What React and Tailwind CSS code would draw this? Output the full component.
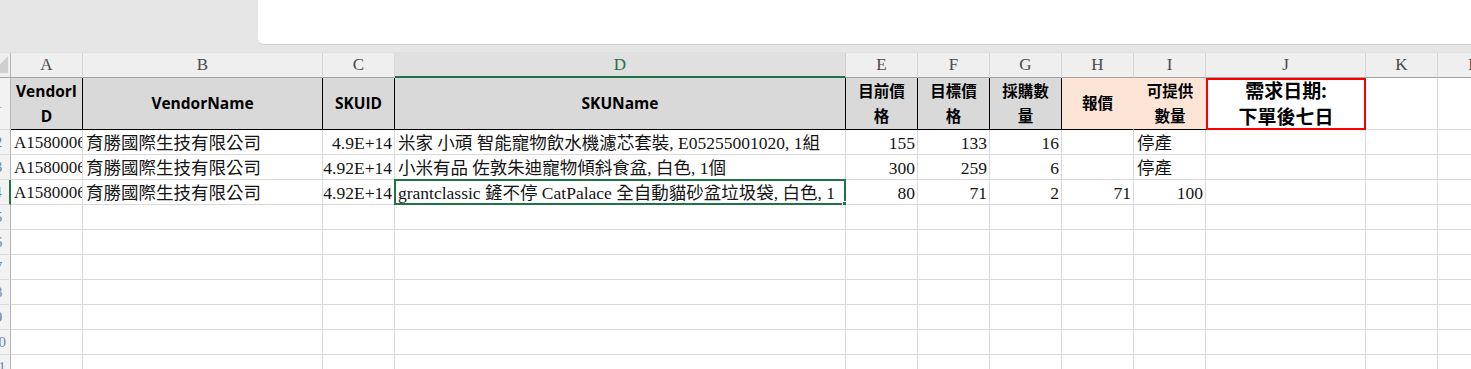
import React from "react";

const serif = "font-['Liberation_Serif','Noto_Sans_CJK_TC',serif]";
const sans = "font-['Open_Sans','Noto_Sans_CJK_TC',sans-serif]";

const columns = ["A", "B", "C", "D", "E", "F", "G", "H", "I", "J", "K", "L"];

// [text, align] per column A..I
const rows = [
  [
    ["A1580006", "l"],
    ["育勝國際生技有限公司", "l"],
    ["4.9E+14", "r"],
    ["米家 小頑 智能寵物飲水機濾芯套裝, E05255001020, 1組", "l"],
    ["155", "r"],
    ["133", "r"],
    ["16", "r"],
    ["", "r"],
    ["停產", "l"],
  ],
  [
    ["A1580006", "l"],
    ["育勝國際生技有限公司", "l"],
    ["4.92E+14", "r"],
    ["小米有品 佐敦朱迪寵物傾斜食盆, 白色, 1個", "l"],
    ["300", "r"],
    ["259", "r"],
    ["6", "r"],
    ["", "r"],
    ["停產", "l"],
  ],
  [
    ["A1580006", "l"],
    ["育勝國際生技有限公司", "l"],
    ["4.92E+14", "r"],
    ["grantclassic 鏟不停 CatPalace 全自動貓砂盆垃圾袋, 白色, 1", "l"],
    ["80", "r"],
    ["71", "r"],
    ["2", "r"],
    ["71", "r"],
    ["100", "r"],
  ],
];

const headers = [
  { lines: ["VendorI", "D"] },
  { lines: ["VendorName"] },
  { lines: ["SKUID"] },
  { lines: ["SKUName"] },
  { lines: ["目前價", "格"] },
  { lines: ["目標價", "格"] },
  { lines: ["採購數", "量"] },
  { lines: ["報價"], peach: true },
  { lines: ["可提供", "數量"], peach: true },
];

const RowHead = ({ n, active, h = "h-[25px]" }) => (
  <div
    className={`${h} bg-[#f2f2f2] border-b border-[#dadada] ${
      active ? "border-r-2 border-r-[#217346]" : "border-r border-r-[#b5b5b5]"
    } flex items-center justify-center text-[15px] text-[#6d87a6] ${serif}`}
  >
    {n}
  </div>
);

const DataCell = ({ text, align, selected, small }) => (
  <div
    className={`relative h-[25px] border-r border-b border-[#dadada] bg-white leading-[26px] text-[#141414] whitespace-nowrap ${serif} ${
      small ? "text-[17px]" : "text-[17.5px]"
    } ${align === "r" ? "text-right pr-[2px]" : "pl-[3px]"}`}
  >
    <div className="overflow-hidden">{text}</div>
    {selected && (
      <>
        <div className="absolute -left-[1px] -top-[1px] -right-[1px] -bottom-[1px] border-2 border-[#217346]" />
        <div className="absolute -right-[4px] -bottom-[4px] w-[7px] h-[7px] bg-[#217346] border border-white" />
      </>
    )}
  </div>
);

export default function App() {
  return (
    <div className="w-[1471px] h-[369px] overflow-hidden bg-white">
      {/* ribbon strip above the sheet */}
      <div className="h-[53px] bg-[#e6e6e6] border-b border-[#e0e0e0]">
        <div className="ml-[258px] h-[45px] bg-white rounded-bl-[6px] border-b border-[#cfcfcf]" />
      </div>

      <div className="ml-[-13px] grid grid-cols-[24px_72px_240px_72px_451px_72px_72px_72px_72px_72px_160px_72px_72px]">
        {/* column letters */}
        <div className="relative h-[25px] bg-[#efefef] border-r border-r-[#b5b5b5] border-b border-b-[#a3a3a3]">
          <svg className="absolute left-[13px] top-[3px]" width="9" height="18" viewBox="0 0 9 18">
            <polygon points="8,0 8,17 -8,17" fill="#cfcfcf" />
          </svg>
        </div>
        {columns.map((c) => (
          <div
            key={c}
            className={`h-[25px] flex items-center justify-center text-[17px] ${serif} ${
              c === "D"
                ? "bg-[#e0e0e0] text-[#217346] border-r border-r-[#d0d0d0] border-b-2 border-b-[#217346]"
                : "bg-[#efefef] text-[#4a4a4a] border-r border-r-[#d6d6d6] border-b border-b-[#a3a3a3]"
            }`}
          >
            {c}
          </div>
        ))}

        {/* header row */}
        <RowHead n="1" h="h-[52px]" />
        {headers.map((h, i) => (
          <div
            key={i}
            className={`h-[52px] flex flex-col items-center justify-center text-[15.5px] leading-[25px] font-bold text-black border-b border-b-black ${sans} ${
              h.peach ? "bg-[#fce4d6]" : "bg-[#d9d9d9]"
            } ${i === 8 ? "" : i === 7 ? "border-r border-r-[#fce4d6]" : "border-r border-r-black"}`}
          >
            {h.lines.map((l) => (
              <span key={l}>{l}</span>
            ))}
          </div>
        ))}
        <div
          className={`h-[52px] flex flex-col items-center justify-center border-2 border-[#ff0000] bg-white text-[19px] leading-[26px] font-bold text-black ${sans}`}
        >
          <span>需求日期:</span>
          <span>下單後七日</span>
        </div>
        <div className="h-[52px] border-r border-b border-[#dadada]" />
        <div className="h-[52px] border-r border-b border-[#dadada]" />

        {/* data rows */}
        {rows.map((r, ri) => (
          <React.Fragment key={ri}>
            <RowHead n={ri + 2} active={ri === 2} />
            {r.map(([t, a], ci) => (
              <DataCell
                key={ci}
                text={t}
                align={a}
                small={ci === 0}
                selected={ri === 2 && ci === 3}
              />
            ))}
            <DataCell text="" align="l" />
            <DataCell text="" align="l" />
            <DataCell text="" align="l" />
          </React.Fragment>
        ))}

        {/* empty rows */}
        {[5, 6, 7, 8, 9, 10, 11].map((n) => (
          <React.Fragment key={n}>
            <RowHead n={n} />
            {columns.map((c) => (
              <DataCell key={c} text="" align="l" />
            ))}
          </React.Fragment>
        ))}
      </div>
    </div>
  );
}
